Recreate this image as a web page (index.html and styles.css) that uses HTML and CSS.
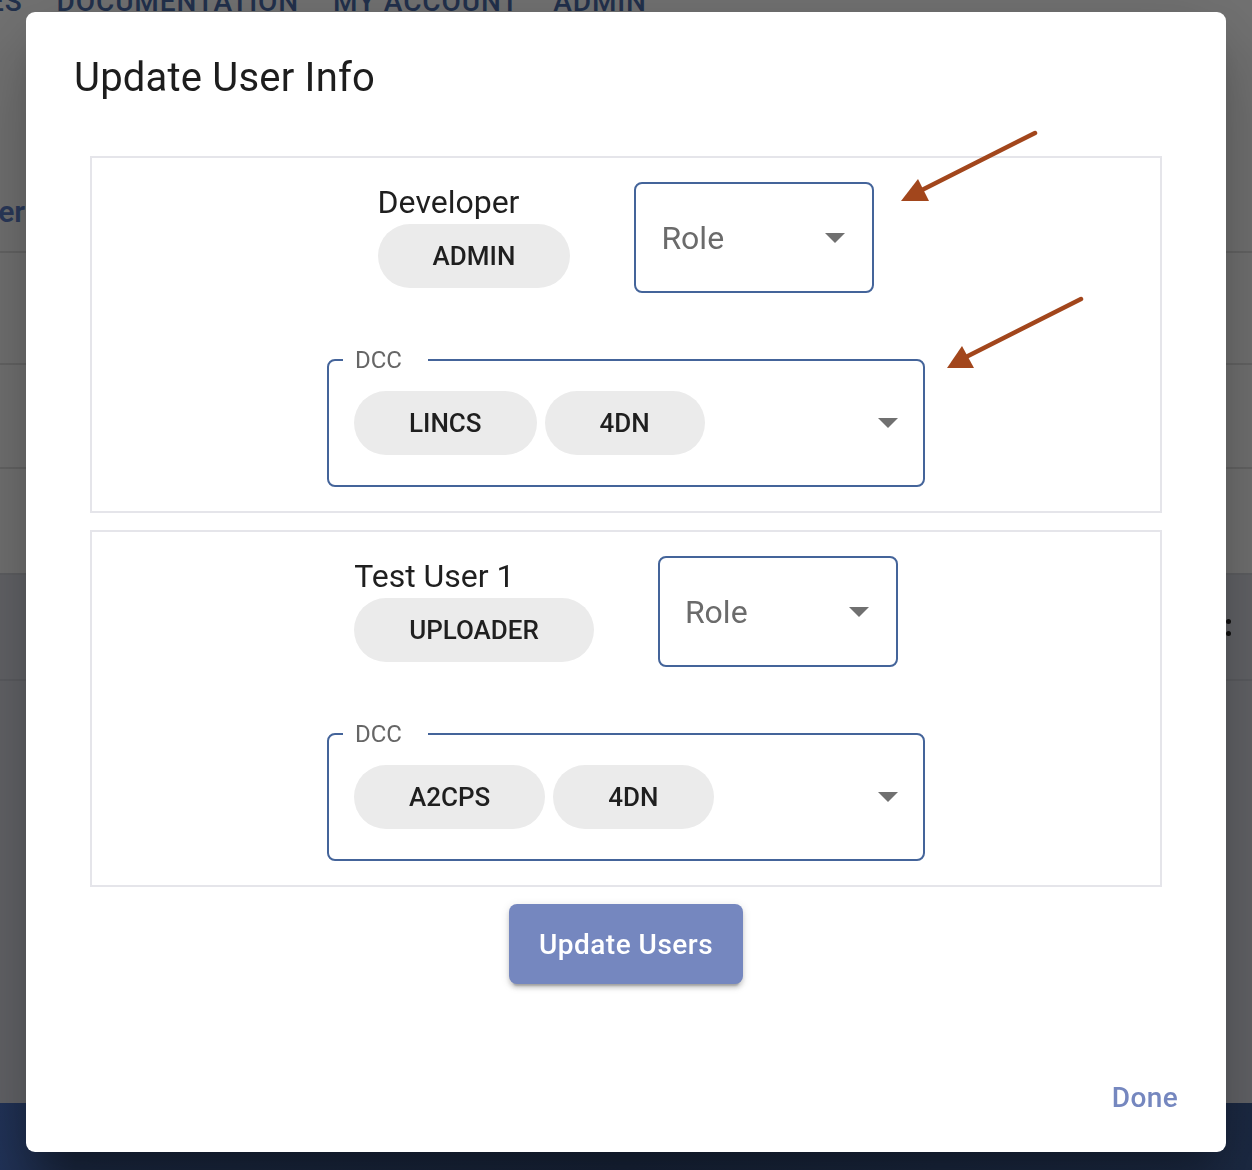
FILE: index.html
```html
<!DOCTYPE html>
<html lang="en">
<head>
<meta charset="utf-8">
<title>Update User Info</title>
<link rel="stylesheet" href="styles.css">
</head>
<body>
<div class="page">
  <nav class="topnav">
    <span>ES</span>
    <span>DOCUMENTATION</span>
    <span>MY ACCOUNT</span>
    <span>ADMIN</span>
  </nav>
  <header class="page-head"><h2>User</h2></header>
  <div class="bg-row r1"></div>
  <div class="bg-row r2"></div>
  <div class="bg-row r3"></div>
  <div class="bg-row r4"><span class="kebab"><i></i><i></i></span></div>
  <div class="bg-row r5"></div>
  <footer class="footer"></footer>
</div>

<div class="dialog" role="dialog">
  <h1 class="dialog-title">Update User Info</h1>
  <div class="dialog-content">
    <section class="card">
      <div class="user-row">
        <div class="user">
          <div class="user-name">Developer</div>
          <span class="chip">ADMIN</span>
        </div>
        <div class="select">
          <span>Role</span>
          <svg class="caret" width="20" height="10" viewBox="0 0 20 10"><path d="M0 0 L10 10 L20 0 Z"/></svg>
        </div>
      </div>
      <fieldset class="dcc">
        <legend>DCC</legend>
        <div class="dcc-body">
          <span class="chip">LINCS</span>
          <span class="chip">4DN</span>
          <svg class="caret push" width="20" height="10" viewBox="0 0 20 10"><path d="M0 0 L10 10 L20 0 Z"/></svg>
        </div>
      </fieldset>
    </section>
    <section class="card">
      <div class="user-row">
        <div class="user">
          <div class="user-name">Test User 1</div>
          <span class="chip">UPLOADER</span>
        </div>
        <div class="select">
          <span>Role</span>
          <svg class="caret" width="20" height="10" viewBox="0 0 20 10"><path d="M0 0 L10 10 L20 0 Z"/></svg>
        </div>
      </div>
      <fieldset class="dcc">
        <legend>DCC</legend>
        <div class="dcc-body">
          <span class="chip">A2CPS</span>
          <span class="chip">4DN</span>
          <svg class="caret push" width="20" height="10" viewBox="0 0 20 10"><path d="M0 0 L10 10 L20 0 Z"/></svg>
        </div>
      </fieldset>
    </section>
    <button class="primary">Update Users</button>
  </div>
  <div class="dialog-actions">
    <button class="text-btn">Done</button>
  </div>
</div>

<svg class="annotations" width="1252" height="1170" viewBox="0 0 1252 1170">
  <g fill="#a2461c" stroke="#a2461c">
    <line x1="1035" y1="133" x2="918" y2="192" stroke-width="4.5" stroke-linecap="round"/>
    <polygon points="901,201 918,179 929,201" stroke="none"/>
    <line x1="1081" y1="299" x2="964" y2="358" stroke-width="4.5" stroke-linecap="round"/>
    <polygon points="947,368 962,346 974,368" stroke="none"/>
  </g>
</svg>
</body>
</html>
```

FILE: styles.css
```css
* { box-sizing: border-box; }

html, body {
  margin: 0;
  height: 100%;
}

body {
  font-family: Roboto, "Liberation Sans", sans-serif;
  background: #737373;
  overflow: hidden;
}

/* ---------- background page (dimmed) ---------- */
.page {
  height: 1170px;
  display: flex;
  flex-direction: column;
}

.topnav {
  margin-top: -12px;
  margin-left: -12px;
  height: 28px;
  display: flex;
  gap: 34px;
  font-size: 28px;
  line-height: 28px;
  font-weight: 500;
  letter-spacing: 0.9px;
  color: #22314d;
  white-space: nowrap;
}

.page-head {
  height: 235px;
  padding-top: 181px;
  overflow: hidden;
}

.page-head h2 {
  margin: 0 0 0 -37px;
  font-size: 30px;
  line-height: 30px;
  font-weight: 600;
  color: #2b3a5c;
}

.bg-row {
  border-top: 2px solid #666666;
}
.bg-row.r1 { height: 112px; }
.bg-row.r2 { height: 104px; }
.bg-row.r3 { height: 106px; }
.bg-row.r4 {
  height: 106px;
  background: #646569;
  border-top-color: #606164;
  display: flex;
  align-items: center;
  justify-content: flex-end;
  padding-right: 21px;
}
.bg-row.r5 {
  height: 424px;
  background: #646569;
  border-top-color: #5d5e62;
}

.kebab {
  display: flex;
  flex-direction: column;
  gap: 7px;
}
.kebab i {
  display: block;
  width: 5px;
  height: 5px;
  border-radius: 50%;
  background: #111;
}

.footer {
  height: 67px;
  background: linear-gradient(90deg, #22345a 0%, #1b2841 6%, #18243a 50%, #1c2a44 100%);
}

/* ---------- dialog ---------- */
.dialog {
  position: fixed;
  left: 26px;
  top: 12px;
  width: 1200px;
  height: 1140px;
  background: #ffffff;
  border-radius: 9px;
  display: flex;
  flex-direction: column;
  box-shadow: 0 22px 30px -14px rgba(0,0,0,0.2),
              0 48px 76px 6px rgba(0,0,0,0.14),
              0 18px 92px 16px rgba(0,0,0,0.12);
}

.dialog-title {
  margin: 0;
  padding: 34px 48px 0;
  font-size: 40px;
  line-height: 64px;
  font-weight: 400;
  letter-spacing: 0.2px;
  color: #1d1d1d;
}

.dialog-content {
  padding: 46px 64px 0;
}

.card {
  border: 2px solid #e5e5ea;
  padding: 24px;
}
.card + .card {
  margin-top: 17px;
}

.user-row {
  display: flex;
  justify-content: center;
  align-items: center;
  gap: 64px;
}

.user {
  display: flex;
  flex-direction: column;
  align-items: flex-start;
}

.user-name {
  font-size: 32px;
  line-height: 30px;
  margin-bottom: 7px;
  color: #1f1f1f;
}

.chip {
  display: inline-block;
  height: 64px;
  line-height: 64px;
  padding: 0 55px;
  border-radius: 32px;
  background: #ebebeb;
  font-size: 26px;
  font-weight: 500;
  color: #1f1f1f;
  white-space: nowrap;
}

.select {
  width: 240px;
  height: 111px;
  border: 2px solid #44649a;
  border-radius: 8px;
  display: flex;
  align-items: center;
  justify-content: space-between;
  padding: 0 27px 0 25px;
  font-size: 32px;
  color: #6b6b6b;
}

.caret {
  display: block;
  fill: #707070;
  flex: none;
}
.caret.push {
  margin-left: auto;
}

.dcc {
  display: block;
  width: 598px;
  margin: 55px auto 0;
  padding: 0;
  border: 2px solid #44649a;
  border-radius: 8px;
}

.dcc legend {
  margin-left: 14px;
  padding: 0 26px 0 12px;
  font-size: 24px;
  line-height: 24px;
  color: #666666;
}

.dcc-body {
  display: flex;
  align-items: center;
  gap: 8px;
  padding: 19px 25px 30px;
}

.primary {
  display: block;
  margin: 17px auto 0;
  height: 80px;
  padding: 0 30px;
  border: 0;
  border-radius: 8px;
  background: #7587bf;
  color: #ffffff;
  font-family: inherit;
  font-size: 28px;
  font-weight: 500;
  letter-spacing: 0.5px;
  box-shadow: 0 6px 2px -4px rgba(0,0,0,0.2),
              0 4px 4px 0 rgba(0,0,0,0.14),
              0 2px 10px 0 rgba(0,0,0,0.12);
}

.dialog-actions {
  margin-top: auto;
  display: flex;
  justify-content: flex-end;
  padding: 0 17px 21px;
}

.text-btn {
  min-width: 128px;
  height: 68px;
  padding: 0 16px;
  border: 0;
  background: none;
  color: #7587bf;
  font-family: inherit;
  font-size: 28px;
  font-weight: 500;
  letter-spacing: 0.4px;
}

/* ---------- annotation overlay ---------- */
.annotations {
  position: fixed;
  left: 0;
  top: 0;
  pointer-events: none;
}
```
